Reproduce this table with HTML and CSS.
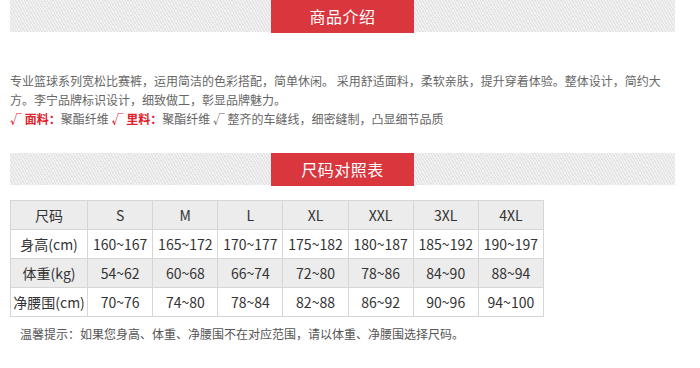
FILE: index.html
```html
<!DOCTYPE html>
<html lang="zh">
<head>
<meta charset="utf-8">
<link rel="stylesheet" href="styles.css">
</head>
<body>
<div class="page">
  <div class="sec-head">
    <div class="stripes"></div>
    <div class="title">商品介绍</div>
    <div class="stripes"></div>
  </div>
  <div class="desc">
    <p>专业篮球系列宽松比赛裤，运用简洁的色彩搭配，简单休闲。 采用舒适面料，柔软亲肤，提升穿着体验。整体设计，简约大方。李宁品牌标识设计，细致做工，彰显品牌魅力。</p>
    <p><b class="red">√ 面料：</b>聚酯纤维 <b class="red">√ 里料：</b>聚酯纤维 √ 整齐的车缝线，细密缝制，凸显细节品质</p>
  </div>
  <div class="sec-head second">
    <div class="stripes"></div>
    <div class="title">尺码对照表</div>
    <div class="stripes"></div>
  </div>
  <table class="size">
    <tr class="gray"><td>尺码</td><td>S</td><td>M</td><td>L</td><td>XL</td><td>XXL</td><td>3XL</td><td>4XL</td></tr>
    <tr><td>身高(cm)</td><td>160~167</td><td>165~172</td><td>170~177</td><td>175~182</td><td>180~187</td><td>185~192</td><td>190~197</td></tr>
    <tr class="gray"><td>体重(kg)</td><td>54~62</td><td>60~68</td><td>66~74</td><td>72~80</td><td>78~86</td><td>84~90</td><td>88~94</td></tr>
    <tr><td>净腰围(cm)</td><td>70~76</td><td>74~80</td><td>78~84</td><td>82~88</td><td>86~92</td><td>90~96</td><td>94~100</td></tr>
  </table>
  <p class="tip">温馨提示：如果您身高、体重、净腰围不在对应范围，请以体重、净腰围选择尺码。</p>
</div>
</body>
</html>
```
FILE: styles.css
```css
* { box-sizing: border-box; }
html, body { margin: 0; padding: 0; background: #fff; }
body {
  font-family: "Noto Sans CJK SC", "Noto Sans", sans-serif;
  color: #666;
}
.page { width: 700px; padding: 0 25px 0 10px; }
.sec-head {
  display: flex;
  align-items: flex-start;
  width: 665px;
}
.sec-head.second { margin-top: 25px; }
.stripes {
  flex: 1;
  height: 32px;
  background: repeating-linear-gradient(60deg, #e2e2e4 0 1px, #f1f1f2 1px 2.5px);
}
.title {
  width: 143px;
  height: 33px;
  background: #d9363e;
  color: #fff;
  font-size: 16px;
  line-height: 33px;
  text-align: center;
  letter-spacing: 0.5px;
}
.desc {
  width: 660px;
  margin-top: 38px;
  font-size: 12px;
  line-height: 19px;
}
.desc p { margin: 0; }
.red { color: #e0202a; font-weight: bold; }
.size {
  margin-top: 14px;
  border-collapse: collapse;
  width: 534px;
  font-size: 14px;
  color: #333;
  table-layout: fixed;
}
.size td {
  border: 1px solid #d6d6d6;
  height: 29px;
  padding: 0;
  text-align: center;
  width: 65px;
}
.size td:first-child { width: 77px; }
.size tr.gray td { background: #ececec; }
.tip {
  margin: 8px 0 0 10px;
  font-size: 12px;
  line-height: 18px;
  color: #555;
}
```
